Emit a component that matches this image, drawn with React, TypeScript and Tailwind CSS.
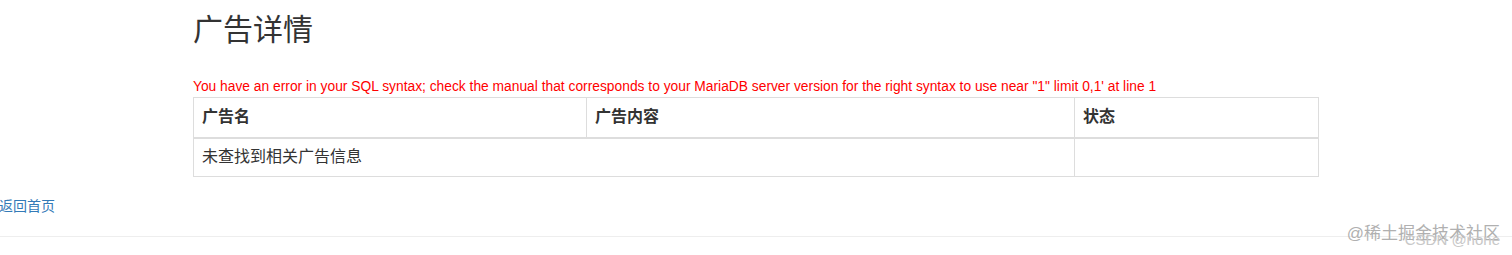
export default function App() {
  return (
    <div className="relative h-[255px] w-[1512px] overflow-hidden bg-white font-['Liberation_Sans','Noto_Sans_CJK_SC',sans-serif] text-[14px] text-[#333]">
      <div className="mx-auto w-[1126px] pt-[13px]">
        <h2 className="text-[30px] leading-[33px] font-normal">广告详情</h2>
        <p className="mt-[31px] text-[13.8px] leading-[20px] text-[#ff0000]">
          You have an error in your SQL syntax; check the manual that corresponds to your MariaDB server version for the right syntax to use near &quot;1&quot; limit 0,1&apos; at line 1
        </p>
        <table className="w-full border-collapse border border-[#ddd] text-[16px]">
          <thead>
            <tr className="h-[40px] border-b-2 border-[#ddd]">
              <th className="w-[393px] border border-b-2 border-[#ddd] px-2 text-left font-bold">广告名</th>
              <th className="w-[488px] border border-b-2 border-[#ddd] px-2 text-left font-bold">广告内容</th>
              <th className="border border-b-2 border-[#ddd] px-2 text-left font-bold">状态</th>
            </tr>
          </thead>
          <tbody>
            <tr className="h-[39px]">
              <td colSpan={2} className="border border-[#ddd] px-2">未查找到相关广告信息</td>
              <td className="border border-[#ddd] px-2"></td>
            </tr>
          </tbody>
        </table>
      </div>
      <a href="#" className="mt-[19px] block -ml-[1px] leading-[20px] text-[#337ab7]">返回首页</a>
      <hr className="mt-[20px] border-t border-[#eee]" />
      <div className="absolute right-[12px] top-[222px] text-[17px] leading-[24px] text-[#b0b0b0]">@稀土掘金技术社区</div>
      <div className="absolute right-[12px] top-[230px] text-[15px] leading-[20px] text-[#c8c8c8]">CSDN @none</div>
    </div>
  )
}
